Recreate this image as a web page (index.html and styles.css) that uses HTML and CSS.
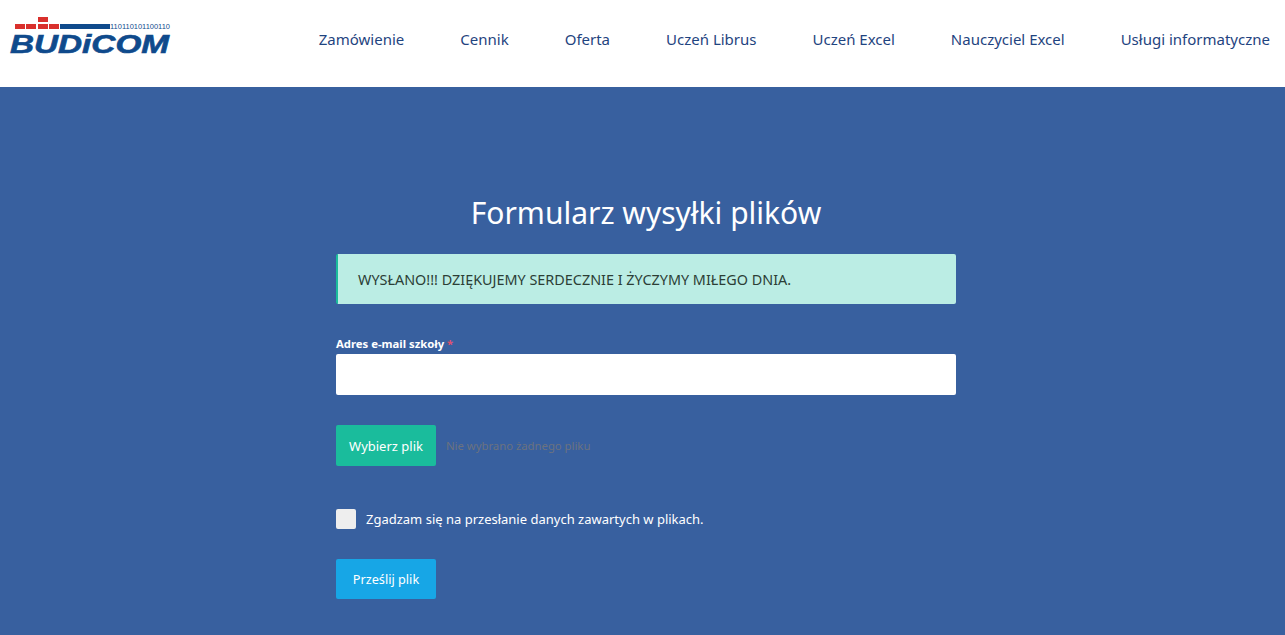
FILE: index.html
```html
<!DOCTYPE html>
<html>
	<head>
		<title>Budicom - Formularz wysyłki plików</title>
		<meta charset="utf-8">
		<link rel="stylesheet" href="styles.css">
	</head>
	<body>
		<header class="top">
			<a class="logo" href="#">
				<svg width="170" height="44" viewBox="0 0 170 44">
					<g fill="#d9302c">
						<rect x="6" y="8" width="10" height="5"></rect>
						<rect x="17" y="8" width="10" height="5"></rect>
						<rect x="29" y="1" width="10" height="5"></rect>
						<rect x="29" y="8" width="10" height="5"></rect>
						<rect x="40" y="8" width="10" height="5"></rect>
					</g>
					<rect x="51" y="8" width="50" height="5" fill="#0f4a8c"></rect>
					<text class="logo-bits" x="101" y="13" textLength="60" lengthAdjust="spacingAndGlyphs">110110101100110</text>
					<text class="logo-name" x="1" y="37" textLength="159" lengthAdjust="spacingAndGlyphs">BUDiCOM</text>
				</svg>
			</a>
			<nav class="menu">
				<a href="#">Zamówienie</a>
				<a href="#">Cennik</a>
				<a href="#">Oferta</a>
				<a href="#">Uczeń Librus</a>
				<a href="#">Uczeń Excel</a>
				<a href="#">Nauczyciel Excel</a>
				<a href="#">Usługi informatyczne</a>
			</nav>
		</header>

		<section class="content">
			<form class="upload">
				<h1>Formularz wysyłki plików</h1>
				<div class="alert">WYSŁANO!!! DZIĘKUJEMY SERDECZNIE I ŻYCZYMY MIŁEGO DNIA.</div>

				<label class="field-label">Adres e-mail szkoły <span class="req">*</span></label>
				<input class="text-input" type="text">

				<div class="file-row">
					<span class="btn btn-file">Wybierz plik</span>
					<span class="file-name">Nie wybrano żadnego pliku</span>
				</div>

				<label class="check-row">
					<span class="check"></span>
					Zgadzam się na przesłanie danych zawartych w plikach.
				</label>

				<span class="btn btn-send">Prześlij plik</span>
			</form>
		</section>
	</body>
</html>
```

FILE: styles.css
```css
html, body {
	margin: 0;
	height: 100%;
}
body {
	font-family: "Noto Sans", "Open Sans", sans-serif;
	background-color: #38609f;
	overflow: hidden;
}
a {
	text-decoration: none;
}

.top {
	height: 87px;
	background-color: #fff;
	display: flex;
	justify-content: space-between;
	padding: 0 15px 0 9px;
}
.logo {
	display: block;
	padding-top: 16px;
}
.logo-name {
	font-family: "Liberation Sans", sans-serif;
	font-size: 25px;
	font-weight: bold;
	font-style: italic;
	fill: #0f4a8c;
	stroke: #0f4a8c;
	stroke-width: 0.6px;
}
.logo-bits {
	font-family: "Liberation Sans", sans-serif;
	font-size: 7px;
	fill: #0f4a8c;
}
.menu {
	display: flex;
	gap: 56px;
	padding-top: 29px;
}
.menu a {
	color: #1f4480;
	font-size: 15px;
	line-height: 21px;
	white-space: nowrap;
}

.content {
	display: flex;
	justify-content: center;
	padding: 104px 0 0 7px;
}
.upload {
	width: 620px;
}
h1 {
	margin: 0 0 20px 0;
	color: #fff;
	font-size: 30px;
	font-weight: normal;
	line-height: 43px;
	text-align: center;
}
.alert {
	height: 50px;
	box-sizing: border-box;
	padding: 0 20px;
	line-height: 51px;
	font-size: 14.4px;
	color: #2c3e36;
	background-color: #bbede4;
	border-left: 2px solid #1abc9c;
	border-radius: 2px;
}
.field-label {
	display: block;
	margin: 32px 0 2px 0;
	color: #fff;
	font-size: 11.3px;
	font-weight: bold;
	line-height: 16px;
}
.req {
	color: #e0506e;
}
.text-input {
	display: block;
	width: 100%;
	height: 41px;
	box-sizing: border-box;
	border: 0;
	border-radius: 2px;
	background-color: #fff;
}
.file-row {
	display: flex;
	align-items: center;
	gap: 10px;
	margin-top: 30px;
}
.btn {
	display: block;
	width: 100px;
	box-sizing: border-box;
	color: #fff;
	font-size: 13px;
	text-align: center;
	border-radius: 2px;
}
.btn-file {
	height: 41px;
	line-height: 42px;
	background-color: #1abc9c;
}
.file-name {
	color: #6b7280;
	font-size: 11.3px;
}
.check-row {
	display: flex;
	align-items: center;
	gap: 10px;
	margin-top: 43px;
	color: #fff;
	font-size: 13px;
	line-height: 20px;
}
.check {
	width: 20px;
	height: 20px;
	background-color: #eee;
	border-radius: 2px;
}
.btn-send {
	height: 40px;
	line-height: 41px;
	margin-top: 30px;
	font-size: 12.7px;
	background-color: #17a6e6;
}
```
